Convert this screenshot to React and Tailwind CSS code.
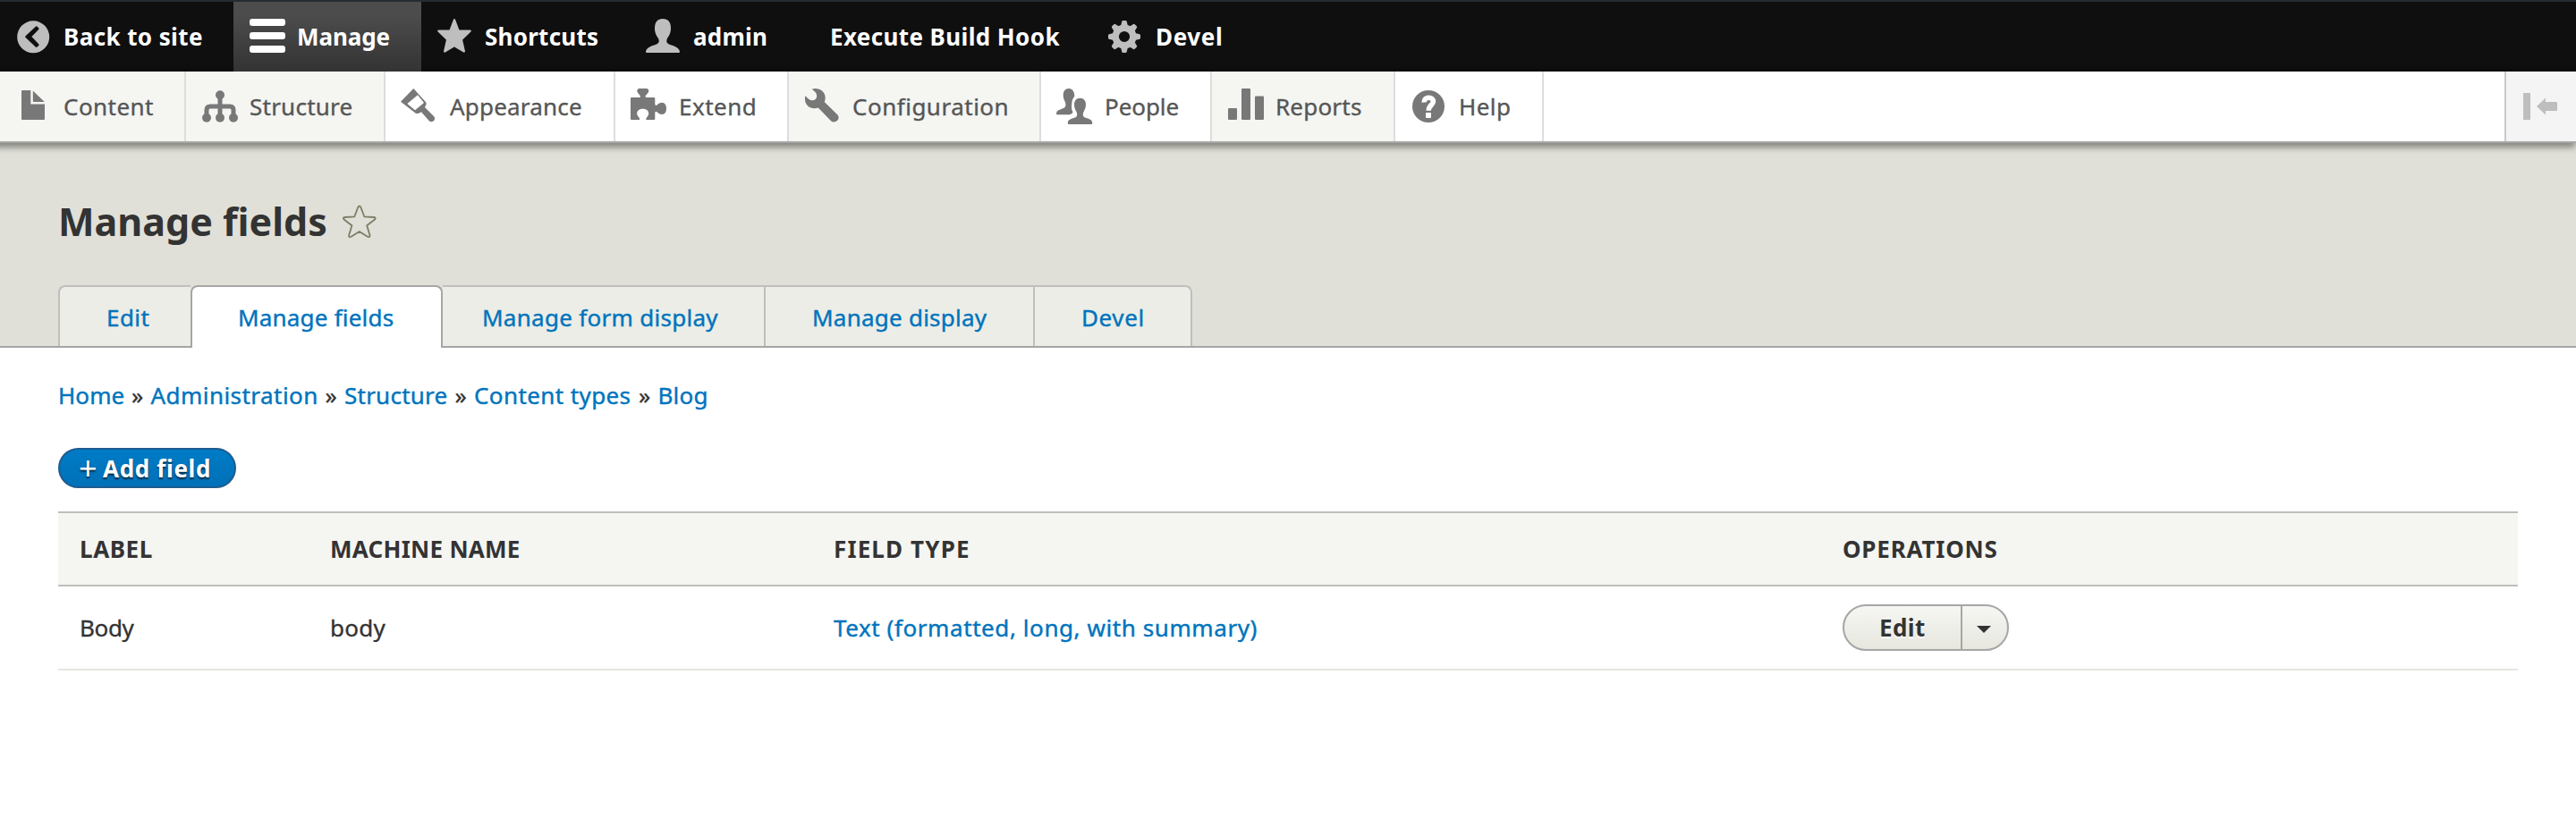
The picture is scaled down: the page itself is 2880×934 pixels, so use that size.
import React from "react";

function Icon({ children, className = "text-[#787878]" }) {
  return (
    <svg viewBox="0 0 40 40" className={`h-10 w-10 shrink-0 overflow-visible ${className}`} fill="currentColor" aria-hidden="true">
      {children}
    </svg>
  );
}

const BackIcon = () => (
  <Icon className="text-[#bebebe]">
    <path fillRule="evenodd" d="M19.2 2.3a18 18 0 1 0 0 36 18 18 0 0 0 0-36ZM23.6 8.7l1.6 1.6q.9.9 0 1.8L17.4 20l7.8 8.2q.9.9 0 1.8l-1.6 1.6q-.9.9-1.8 0L10.6 21q-.9-.9 0-1.8L21.8 8.7q.9-.9 1.8 0Z" />
  </Icon>
);

const MenuIcon = () => (
  <Icon className="text-white">
    <rect x="0" y="0" width="40" height="8" rx="3" />
    <rect x="0" y="15" width="40" height="8" rx="3" />
    <rect x="0" y="30" width="40" height="8" rx="3" />
  </Icon>
);

const StarIcon = () => (
  <Icon className="text-[#bebebe]">
    <path stroke="currentColor" strokeWidth="2.4" strokeLinejoin="round" d="M19 1.3 23.6 13.6H36.6L26.8 23.2 29.8 36.4 19 30 8.2 36.4 11.2 23.2 1.4 13.6H14.4Z" />
  </Icon>
);

const UserIcon = () => (
  <Icon className="text-[#bebebe]">
    <path d="M19 0C13 0 10 4 10 10.500C10 16 12 19 14 22C15.200 24.500 15 26.500 13 28C9 30 1 31 0 36.500Q0 38 1 38H37Q38 38 38 36.500C37 31 29 30 25 28C23 26.500 22.800 24.500 24 22C26 19 28 16 28 10.500C28 4 25 0 19 0Z" />
  </Icon>
);

const TEETH = [0, 45, 90, 135, 180, 225, 270, 315];

const GearIcon = () => (
  <Icon className="text-[#bebebe]">
    <circle cx="18" cy="20" r="9.800" fill="none" stroke="currentColor" strokeWidth="7.400" />
    {TEETH.map((angle) => (
      <path key={angle} transform={`rotate(${angle} 18 20)`} d="M13.800 9 15.300 3Q15.500 2 16.500 2h3Q20.500 2 20.700 3L22.200 9Z" />
    ))}
  </Icon>
);

const ContentIcon = () => (
  <Icon>
    <path d="M7 2H16.300V17.600H32V34a1 1 0 0 1-1 1H7a1 1 0 0 1-1-1V3a1 1 0 0 1 1-1Z" />
    <path d="M18.800 2.500 31.800 15H19.800a1 1 0 0 1-1-1Z" />
  </Icon>
);

const StructureIcon = () => (
  <Icon>
    <path fill="none" stroke="currentColor" strokeWidth="5" d="M5 32V24Q5 20 9 20H31Q35 20 35 24V32M20 8V32" />
    <circle cx="20" cy="7.300" r="5" />
    <circle cx="5" cy="32.700" r="5" />
    <circle cx="20" cy="32.700" r="5" />
    <circle cx="35" cy="32.700" r="5" />
  </Icon>
);

const AppearanceIcon = () => (
  <Icon>
    <path fillRule="evenodd" d="M13.300 0 27.500 15.800Q28.200 18.500 26 21L36.200 31.200Q38 34 36 36 33.500 38.300 30.800 36.300L22 26.300Q19 28.800 15.800 27.800L-1 14.700ZM18 7.200 6.300 16.900 15 24.200 25 16Z" />
  </Icon>
);

const ExtendIcon = () => (
  <Icon>
    <path d="M-1 11Q-1 10 0 10H9.500C11.500 7.500 6.300 6 6.300 2.500Q6.300 0 8.500 0H17Q19.300 0 19.300 2.500C19.300 6 14 7.500 16 10H25.300Q26.300 10 26.300 11V17.500C27.500 21.500 29.500 15.700 34 15.700C37.500 15.700 39 19 39 22.300C39 26 37.500 29 34 29C29.500 29 27.500 23.500 26.300 27V34Q26.300 35 25.300 35H16.500C15.500 32.500 19.200 31.500 19.200 28C19.200 24.500 16 22.700 12.700 22.700C9.300 22.700 6.200 24.500 6.200 28C6.200 31.500 10 32.500 9 35H0Q-1 35-1 34Z" />
  </Icon>
);

const ConfigurationIcon = () => (
  <Icon>
    <path d="M7.700.700C14-1.500 22.700 2 22.700 10.500Q22.700 13 21.700 15L36.500 29.500Q38.800 32.500 36.300 35.800 32.500 38.800 29.300 36.500L14.700 21.500C8 24 0 20 0 12V8.300L5 12.600Q7.500 14 10.500 12.700 13.300 11.500 13.200 8 13 5.500 11.500 4Z" />
  </Icon>
);

const PeopleIcon = () => (
  <Icon>
    <path d="M25.500 10.700C21 10.700 19 14 19 18C19 22 20.500 24 21.700 26.500C22.500 29 22.500 31 20.500 32.200C16.500 34 12 34 11.700 38.500Q11.700 40 13 40H38Q39.300 40 39.300 38.500C39 34 34.500 34 30.500 32.200C28.500 31 28.500 29 29.300 26.500C30.500 24 32 22 32 18C32 14 30 10.700 25.500 10.700Z" />
    <path d="M13 0C9 0 6.700 3 6.700 7.500C6.700 11 8 13 9 15.500C9.700 18 9.700 20 8 21.500C4 23.500-.700 24-1 28Q-1 29.300 0 29.300H14C15 28.500 17 28 17.500 26.500C15.500 23 16 20 16.300 17C16.500 13 17.500 11 19.200 9C19.800 4 17 0 13 0Z" />
  </Icon>
);

const ReportsIcon = () => (
  <Icon>
    <rect x="0" y="22" width="10" height="13" rx="1" />
    <rect x="15" y="0" width="10" height="35" rx="1" />
    <rect x="30" y="8.500" width="10" height="26.500" rx="1" />
  </Icon>
);

const HelpIcon = () => (
  <Icon>
    <circle cx="19" cy="20" r="18" />
    <path fill="none" stroke="white" strokeWidth="5.600" d="M14.200 15.500C14 12 16.500 10.200 19.300 10.200C22.200 10.200 24.400 12 24.400 14.600C24.400 18.500 19.200 18.500 19.200 24.800" />
    <rect x="16" y="27" width="6" height="6" rx="1" fill="white" />
  </Icon>
);

const BAR = [
  { label: "Back to site", icon: BackIcon, box: "w-[261px]", text: "tracking-[0.4px]" },
  { label: "Manage", icon: MenuIcon, box: "w-[210px] bg-linear-to-b from-[#4c4c4c] from-20% to-[#333333]", text: "tracking-[-0.1px]" },
  { label: "Shortcuts", icon: StarIcon, box: "w-[233px]", text: "tracking-[0.25px]" },
  { label: "admin", icon: UserIcon, box: "w-[188px]", text: "tracking-[0.22px]" },
  { label: "Execute Build Hook", box: "w-[329px]", text: "ml-[5px] tracking-[0.39px]" },
  { label: "Devel", icon: GearIcon, box: "w-[170px]", text: "tracking-[0.65px]" },
];

const TRAY = [
  { label: "Content", icon: ContentIcon, box: "w-[208px] bg-[#f5f5f2]", text: "tracking-[0.45px]" },
  { label: "Structure", icon: StructureIcon, box: "w-[223px] bg-[#f5f5f2]", text: "tracking-[0.24px]" },
  { label: "Appearance", icon: AppearanceIcon, box: "w-[257px]", text: "ml-[1px] tracking-[0.2px]" },
  { label: "Extend", icon: ExtendIcon, box: "w-[194px]", text: "tracking-[0.5px]" },
  { label: "Configuration", icon: ConfigurationIcon, box: "w-[282px] bg-[#f5f5f2]", text: "tracking-[0.5px]" },
  { label: "People", icon: PeopleIcon, box: "w-[191px]", text: "tracking-[-0.06px]" },
  { label: "Reports", icon: ReportsIcon, box: "w-[205px] bg-[#f5f5f2]", text: "tracking-[0.2px]" },
  { label: "Help", icon: HelpIcon, box: "w-[166px]", text: "tracking-[0.47px]" },
];

const TABS = [
  { label: "Edit", box: "h-[68px] w-[148px] rounded-tl-[8px] border-l-2 border-[#bfbfbf] bg-[#ecede6] pl-[52px] tracking-[0.43px]" },
  { label: "Manage fields", box: "-mb-[2px] h-[70px] w-[282px] rounded-t-[8px] border-x-2 border-[#a6a6a6] bg-white pb-[2px] pl-[51px] tracking-[0.2px]" },
  { label: "Manage form display", box: "h-[68px] w-[361px] border-r-2 border-[#bfbfbf] bg-[#ecede6] pl-[44px] tracking-[0.29px]" },
  { label: "Manage display", box: "h-[68px] w-[301px] border-r-2 border-[#bfbfbf] bg-[#ecede6] pl-[52px] tracking-[0.24px]" },
  { label: "Devel", box: "h-[68px] w-[176px] rounded-tr-[8px] border-r-2 border-[#bfbfbf] bg-[#ecede6] pl-[52px] tracking-[0.6px]" },
];

const CRUMBS = [
  { label: "Home", box: "w-[82px] tracking-[0.07px]" },
  { label: "Administration", box: "w-[195px] tracking-[0.45px]" },
  { label: "Structure", box: "w-[123.500px] tracking-[0.24px]" },
  { label: "Content types", box: "w-[184px] tracking-[0.4px]" },
  { label: "Blog", box: "tracking-[0.2px]" },
];

function Toolbar() {
  return (
    <header className="relative z-10">
      <nav className="flex h-20 border-t-2 border-[#262c30] bg-[#0f0f0f] font-bold text-white">
        {BAR.map(({ label, icon: Glyph, box, text }) => (
          <a key={label} className={`flex h-full items-center pl-[18px] ${box}`}>
            {Glyph && <Glyph />}
            <span className={`pl-[13px] whitespace-nowrap ${text}`}>{label}</span>
          </a>
        ))}
      </nav>
      <nav className="flex h-20 border-b-2 border-[#a8a8a8] bg-white text-[#565656] shadow-[-4px_2px_7px_3px_rgba(0,0,0,0.4)] [-webkit-text-stroke:0.35px_currentColor]">
        {TRAY.map(({ label, icon: Glyph, box, text }) => (
          <a key={label} className={`flex h-full items-center border-r-2 border-[#dddddd] pl-[18px] ${box}`}>
            <Glyph />
            <span className={`pl-[13px] whitespace-nowrap ${text}`}>{label}</span>
          </a>
        ))}
        <button className="ml-auto flex w-20 items-center border-l-2 border-[#c9c9c9] bg-[#f4f4f4] pl-[19px]" aria-label="Vertical orientation">
          <svg viewBox="0 0 38 30" className="h-[30px] w-[38px] text-[#bebebe]" fill="currentColor">
            <rect width="8" height="30" />
            <path d="M15 15 25 5.500V10H37q1 0 1 1v8q0 1-1 1H25v4.500Z" />
          </svg>
        </button>
      </nav>
    </header>
  );
}

function PageHeader() {
  return (
    <section className="flex h-[229px] flex-col justify-between border-b-2 border-[#a6a6a6] bg-[#e0e0d8] pl-[65px]">
      <div className="mt-[58px] flex h-[60px] items-center">
        <h1 className="text-[43px] font-bold whitespace-nowrap text-[#333333]">Manage fields</h1>
        <svg viewBox="0 0 38 38" className="ml-[17px] h-[38px] w-[38px]" fill="none" stroke="#7f7c66" strokeWidth="1.800" strokeLinejoin="round" aria-hidden="true">
          <path d="M17.300 2.800Q18.800.200 20.300 2.800L24.300 13.300 35.200 14Q37.600 14.500 36 16.500L27.200 23.300 30.500 34.200Q30.600 37 28 35.800L18.800 30 9.600 35.800Q7 37 7.100 34.200L10.400 23.300 1.600 16.500Q0 14.500 2.400 14L13.300 13.300Z" />
        </svg>
      </div>
      <nav className="flex items-end text-[#0074bd] [-webkit-text-stroke:0.4px_currentColor]">
        {TABS.map(({ label, box }) => (
          <a key={label} className={`flex items-center border-t-2 whitespace-nowrap ${box}`}>
            <span className="pt-[1px]">{label}</span>
          </a>
        ))}
      </nav>
    </section>
  );
}

function FieldTable() {
  const columns = "grid grid-cols-[280px_563px_1128px_1fr] items-center *:pl-6";
  return (
    <div className="mt-[26px] whitespace-nowrap">
      <div className={`${columns} h-[84px] border-y-2 border-[#bfbfba] bg-[#f5f5f2] font-bold`}>
        <div className="tracking-[0.6px]">LABEL</div>
        <div className="tracking-[0.28px]">MACHINE NAME</div>
        <div className="tracking-[1.14px]">FIELD TYPE</div>
        <div className="tracking-[0.8px]">OPERATIONS</div>
      </div>
      <div className={`${columns} h-[94px] border-b-2 border-[#e6e6df]`}>
        <div className="tracking-[-0.37px] [-webkit-text-stroke:0.35px_currentColor]">Body</div>
        <div className="tracking-[0.27px] [-webkit-text-stroke:0.35px_currentColor]">body</div>
        <div className="tracking-[0.58px] text-[#0074bd] [-webkit-text-stroke:0.4px_currentColor]">Text (formatted, long, with summary)</div>
        <div>
          <div className="flex h-[52px] w-[186px] overflow-hidden rounded-full border-2 border-[#a6a6a6] bg-linear-to-b from-[#f6f6f3] to-[#e7e7df]">
            <button className="flex w-[132px] items-center border-r-2 border-[#a6a6a6] pl-[39px] font-bold tracking-[0.4px] [text-shadow:0_2px_0_#ffffff]">Edit</button>
            <button className="flex flex-1 items-center pt-[4px] pl-[16px]" aria-label="List additional actions">
              <svg viewBox="0 0 16 8" className="h-2 w-4" fill="#333333">
                <path d="M0 0H16L8 8Z" />
              </svg>
            </button>
          </div>
        </div>
      </div>
    </div>
  );
}

export default function App() {
  return (
    <div className="min-h-[934px] w-full bg-white font-['Noto_Sans',sans-serif] text-[26px] leading-[36px] text-[#333333]">
      <Toolbar />
      <PageHeader />
      <main className="px-[65px] pt-[35px]">
        <nav className="flex [-webkit-text-stroke:0.4px_currentColor]">
          {CRUMBS.map(({ label, box }, i) => (
            <React.Fragment key={label}>
              {i > 0 && <span className="w-[21.500px]">»</span>}
              <a className={`whitespace-nowrap text-[#0074bd] ${box}`}>{label}</a>
            </React.Fragment>
          ))}
        </nav>
        <a className="mt-[41px] flex h-[45px] w-[199px] items-center rounded-full border-2 border-[#1e5c90] bg-linear-to-b from-[#007bc6] to-[#0071b8] pl-[21px] font-bold text-white [text-shadow:0_2px_2px_rgba(0,0,0,0.65)]">
          <span className="w-[27px] text-[36px] leading-none font-normal">+</span>
          <span className="tracking-[0.66px] whitespace-nowrap">Add field</span>
        </a>
        <FieldTable />
      </main>
    </div>
  );
}
